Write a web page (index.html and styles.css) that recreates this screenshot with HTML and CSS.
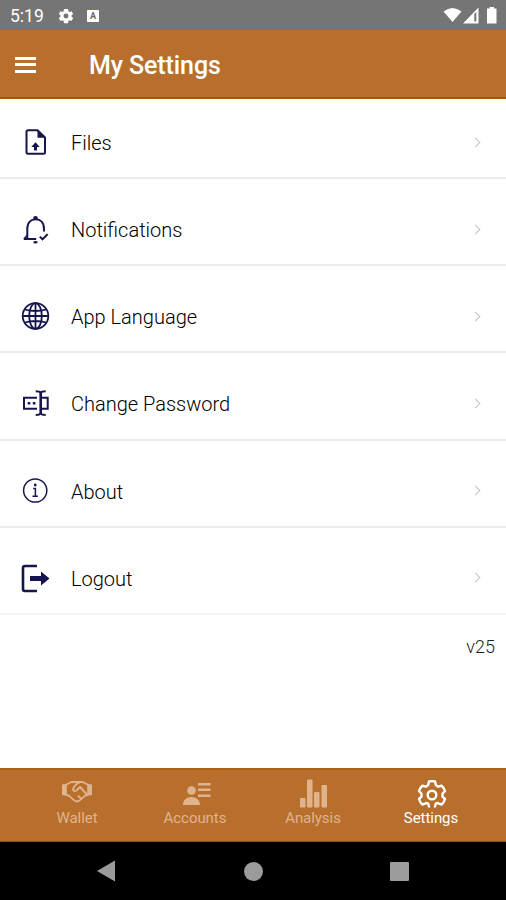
FILE: index.html
```html
<!DOCTYPE html>
<html lang="en">
	<head>
		<meta charset="utf-8">
		<title>My Settings</title>
		<link rel="stylesheet" href="styles.css">
	</head>
	<body>
		<div class="phone">
			<div class="status">
				<span class="time">5:19</span>
				<svg width="18" height="18" viewBox="0 0 24 24"><path fill="#fff" d="M19.400 13a7.500 7.500 0 0 0 0-2l2.200-1.700-2.200-3.800-2.600 1a7.500 7.500 0 0 0-1.700-1L14.700 2.500h-5.400l-.4 3a7.500 7.500 0 0 0-1.700 1l-2.600-1-2.200 3.800L4.600 11a7.500 7.500 0 0 0 0 2l-2.200 1.700 2.200 3.800 2.600-1a7.500 7.500 0 0 0 1.700 1l.4 3h5.400l.4-3a7.500 7.500 0 0 0 1.700-1l2.600 1 2.200-3.800zM12 15.300a3.300 3.300 0 1 1 0-6.600 3.300 3.300 0 0 1 0 6.600z"/></svg>
				<span class="badge">A</span>
				<svg class="signals" width="56" height="18" viewBox="0 0 56 18">
					<path fill="#fff" d="M1.500 5.500Q10.500-1.500 19.500 5.500L10.500 16z"/>
					<path fill="#fff" fill-rule="evenodd" d="M21 17.500L36.500 1.500v16zM32.300 8v7.500h2V6z"/>
					<path fill="#fff" d="M45 2.500h2.500V1h4.500v1.500h2.500v15H45z"/>
				</svg>
			</div>

			<div class="header">
				<div class="menu"><i></i><i></i><i></i></div>
				<h1>My Settings</h1>
			</div>

			<ul class="list">
				<li>
					<svg width="30" height="30" viewBox="0 0 30 30">
						<path class="line" d="M8 3.300h9.500L25 10.500v14.700q0 1.500-1.500 1.500H8q-1.500 0-1.500-1.500V4.800q0-1.500 1.500-1.500z"/>
						<path class="solid" d="M17.500 3.500v7.300H25zM15.500 15.300l4.200 4.700h-2.700v3.600h-3V20h-2.700z"/>
					</svg>
					<span>Files</span>
					<b></b>
				</li>
				<li>
					<svg width="30" height="30" viewBox="0 0 30 30">
						<path class="line" d="M3.800 25h12.400M7.300 24.500v-9.500C7.300 8.500 11 5.300 15.700 5.300S24 8.500 24 15v2.500M19.800 22.600l2.700 2.700 5.200-5.200"/>
						<path class="line thin" d="M7 21.500L4 25"/>
						<ellipse class="solid" cx="15.500" cy="3.800" rx="2.300" ry="1.900"/>
						<ellipse class="solid" cx="15.500" cy="28.300" rx="2.200" ry="1.300"/>
					</svg>
					<span>Notifications</span>
					<b></b>
				</li>
				<li>
					<svg width="30" height="30" viewBox="0 0 30 30">
						<g class="line globe">
							<circle cx="15.500" cy="15" r="12.800"/>
							<ellipse cx="15.500" cy="15" rx="6.300" ry="12.800"/>
							<path d="M15.500 2v26M2.700 15h25.600M4.800 8.500q10.700 3 21.400 0M4.800 21.500q10.700-3 21.400 0"/>
						</g>
					</svg>
					<span>App Language</span>
					<b></b>
				</li>
				<li>
					<svg width="30" height="30" viewBox="0 0 30 30">
						<path class="line" d="M17 9.800H4v10.900h13M21 9.800h6.700v10.900H21"/>
						<path class="line thick" d="M20.700 4v22"/>
						<path class="line" d="M15.700 3.200q4 0 5 1.500 1-1.500 5-1.500M15.700 27q4 0 5-1.500 1 1.500 5 1.500"/>
						<path class="solid" d="M7.700 13.900h2.600v2.600H7.700zM12.800 13.900h2.600v2.600h-2.600z"/>
					</svg>
					<span>Change Password</span>
					<b></b>
				</li>
				<li>
					<svg width="30" height="30" viewBox="0 0 30 30">
						<circle class="line thin" cx="15.200" cy="14.500" r="11.600"/>
						<circle class="solid" cx="15.200" cy="9" r="1.400"/>
						<path class="line thin" d="M13.200 12.500h2.200V20M12.500 20.300h5.400"/>
					</svg>
					<span>About</span>
					<b></b>
				</li>
				<li>
					<svg width="30" height="30" viewBox="0 0 30 30">
						<path class="line thick" d="M17 3H5Q3 3 3 5v21q0 2 2 2h12"/>
						<path class="solid" d="M10 13h11V8.500l8.500 7-8.500 7V18H10z"/>
					</svg>
					<span>Logout</span>
					<b></b>
				</li>
			</ul>
			<p class="version">v25</p>

			<div class="tabs">
				<div class="tab">
					<svg width="32" height="30" viewBox="0 0 32 30">
						<g fill="none" stroke="currentColor" stroke-width="1.900" stroke-linejoin="round" stroke-linecap="round">
							<path d="M5.500 6.500L10.500 4h11l5 2.500M5.500 17q2.500 0 4.500 2.500 3 3.500 6 4 3-.5 6-4 2-2.500 4.500-2.500"/>
							<path d="M18.500 4.300q-4.500 1.500-6.500 6.700.5 3.200 3.500 1.500l3.500-3.500 6.500 7M20 20.500L17.500 18"/>
						</g>
						<path fill="currentColor" d="M1 6.500l4.800-.8v12.100L1 17zM31 6.500l-4.800-.8v12.100L31 17z"/>
					</svg>
					<span>Wallet</span>
				</div>
				<div class="tab">
					<svg width="32" height="30" viewBox="0 0 32 30">
						<circle cx="12.500" cy="12.500" r="4.300" fill="currentColor"/>
						<path fill="currentColor" d="M4 27c0-5 3.500-8 8.500-8s8.500 3 8.500 8zM19 5h12.500v2.600H19zM19 10.500h12.500v2.600H19zM19 16.500h12.500v2.600H19z"/>
					</svg>
					<span>Accounts</span>
				</div>
				<div class="tab">
					<svg width="32" height="30" viewBox="0 0 32 30">
						<g fill="currentColor">
							<rect x="3" y="20" width="5.500" height="9.500" rx="1"/>
							<rect x="10" y="1.500" width="5.500" height="28" rx="1"/>
							<rect x="17" y="14" width="5.500" height="15.500" rx="1"/>
							<rect x="24.500" y="7" width="5.500" height="22.500" rx="1"/>
						</g>
					</svg>
					<span>Analysis</span>
				</div>
				<div class="tab active">
					<svg width="32" height="30" viewBox="0 0 32 30">
						<g fill="none" stroke="currentColor" stroke-width="2.400" stroke-linejoin="round" stroke-linecap="round">
							<path d="M14 28.500l-.8-2.800q-1.700-1.300-3 0l-2.800.8Q5 24.500 4 21l2.500-2.300v-3L4 13q1-3.500 3.400-5.300l3 .8q1.800 0 2.800-1.700L14 3.500q3-.8 6 0l.8 3.300q1 1.700 2.800 1.700l3-.8Q29 9.500 30 13l-2.500 2.700v3L30 21q-1 3.500-3.400 5.500l-2.800-.8q-1.300-1.300-3 0l-.8 2.800"/>
							<circle cx="17" cy="17" r="4.300"/>
						</g>
					</svg>
					<span>Settings</span>
				</div>
			</div>

			<div class="nav">
				<svg width="20" height="22" viewBox="0 0 20 22"><path fill="#9b9b9b" d="M0 11L18 .5v21z"/></svg>
				<i class="home"></i>
				<i class="recent"></i>
			</div>
		</div>
	</body>
</html>
```
FILE: styles.css
```css
* {
	margin: 0;
	padding: 0;
	box-sizing: border-box;
}

body {
	font-family: Roboto, "Liberation Sans", sans-serif;
	background-color: #fff;
}

li {
	list-style: none;
}

svg {
	display: block;
	flex: none;
	overflow: visible;
}

.phone {
	display: flex;
	flex-direction: column;
	width: 506px;
	height: 900px;
	overflow: hidden;
}

/* status bar */
.status {
	display: flex;
	align-items: center;
	height: 30px;
	padding: 1px 8px 0 10px;
	background-color: #757575;
	color: #fff;
}

.time {
	width: 47px;
	font-size: 17.5px;
}

.badge {
	width: 12px;
	height: 12px;
	margin-left: 12px;
	border-radius: 1px;
	background-color: #fff;
	color: #666;
	font-size: 9px;
	font-weight: bold;
	line-height: 12px;
	text-align: center;
}

.signals {
	margin: -2px 0 0 auto;
}

/* header */
.header {
	display: flex;
	align-items: center;
	height: 69px;
	padding: 2px 0 0 15px;
	background-color: #b86f2d;
	border-bottom: 2px solid #a9550f;
	color: #fff;
}

.menu {
	width: 21px;
	margin-right: 53px;
}

.menu i {
	display: block;
	height: 3px;
	margin: 3.5px 0;
	background-color: #fff;
}

.header h1 {
	margin-top: 1px;
	font-size: 25px;
	font-weight: 500;
	letter-spacing: -0.1px;
}

/* list */
.list li {
	display: flex;
	align-items: center;
	height: 87.2px;
	padding: 15px 24px 0 20px;
	border-bottom: 2px solid #ececec;
	color: #000;
	font-size: 20px;
}

.list li:first-child {
	height: 80px;
	padding-top: 8px;
}

.list li:last-child {
	border-color: #f5f5f5;
}

.list span {
	flex-grow: 1;
	margin: 2px 0 0 21px;
	font-weight: 300;
}

.list b {
	width: 7px;
	height: 7px;
	margin-right: 3px;
	border: solid #c4c4c4;
	border-width: 1.5px 1.5px 0 0;
	transform: rotate(45deg);
}

.line {
	fill: none;
	stroke: #16154d;
	stroke-width: 2;
}

.thin {
	stroke-width: 1.5;
}

.globe {
	stroke-width: 1.8;
}

.thick {
	stroke-width: 2.6;
}

.solid {
	fill: #16154d;
}

.version {
	margin-top: 21px;
	padding-right: 11px;
	color: #222;
	font-size: 18px;
	font-weight: 300;
	text-align: right;
}

/* bottom tabs */
.tabs {
	display: flex;
	height: 74px;
	margin-top: auto;
	padding: 8px 16px 0 18px;
	background-color: #b86f2d;
	border-top: 2px solid #ad6217;
	border-bottom: 1px solid #8f4c14;
}

.tab {
	display: flex;
	flex: 1;
	flex-direction: column;
	align-items: center;
	color: #dfb48d;
	font-size: 15px;
}

.tab span {
	margin-top: 1px;
	line-height: 18px;
	letter-spacing: -0.05px;
}

.active {
	color: #fff;
}

/* android buttons */
.nav {
	display: flex;
	align-items: center;
	justify-content: space-between;
	height: 58px;
	padding: 0 97px;
	background-color: #000;
}

.nav i {
	width: 19px;
	height: 19px;
	background-color: #9b9b9b;
}

.nav .home {
	border-radius: 50%;
}

.nav .recent {
	border-radius: 1px;
}
```
